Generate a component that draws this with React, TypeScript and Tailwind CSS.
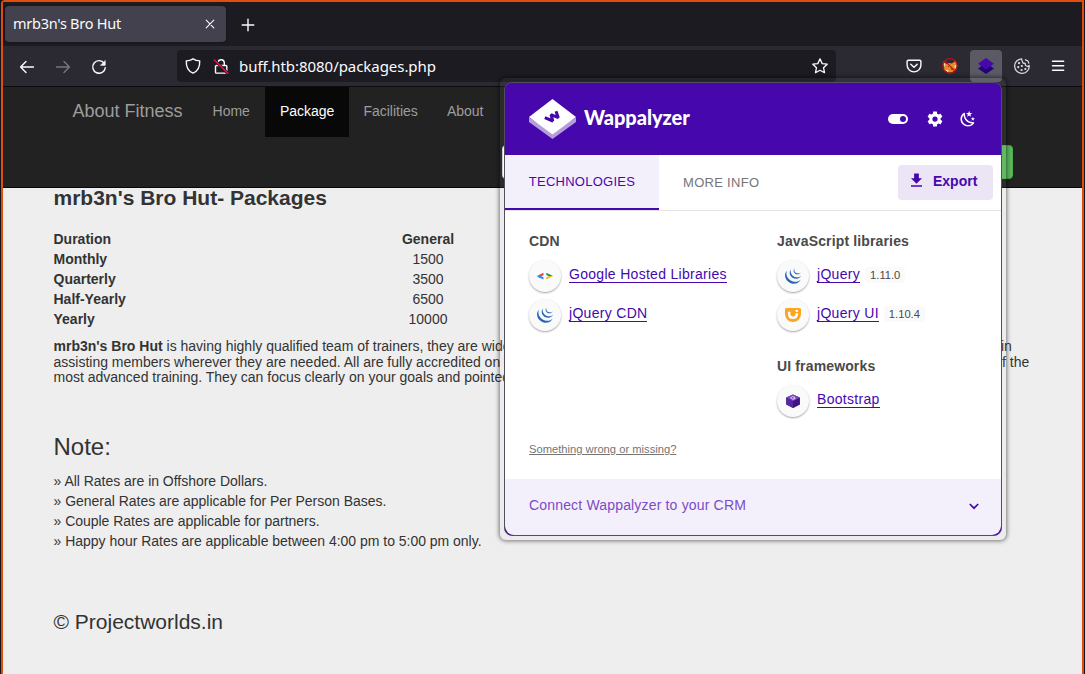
import React from "react";
import { MdDownload } from "react-icons/md";
import { SiJquery } from "react-icons/si";

const MOON =
  "M17.75,4.09L15.22,6.03L16.13,9.09L13.5,7.28L10.87,9.09L11.78,6.03L9.25,4.09L12.44,4L13.5,1L14.56,4L17.75,4.09M21.25,11L19.61,12.25L20.2,14.23L18.5,13.06L16.8,14.23L17.39,12.25L15.75,11L17.81,10.95L18.5,9L19.19,10.95L21.25,11M18.97,15.95C19.8,15.87 20.69,17.05 20.16,17.8C19.84,18.25 19.5,18.67 19.08,19.07C15.17,23 8.84,23 4.94,19.07C1.03,15.17 1.03,8.83 4.94,4.93C5.34,4.53 5.76,4.17 6.21,3.85C6.96,3.32 8.14,4.21 8.06,5.04C7.79,7.9 8.75,10.87 10.95,13.06C13.14,15.26 16.1,16.22 18.97,15.95M17.33,17.97C14.5,17.81 11.7,16.64 9.53,14.5C7.36,12.31 6.2,9.5 6.04,6.68C3.23,9.82 3.34,14.64 6.35,17.66C9.37,20.67 14.19,20.78 17.33,17.97Z";
const COG =
  "M12,15.5A3.5,3.5 0 0,1 8.5,12A3.5,3.5 0 0,1 12,8.5A3.5,3.5 0 0,1 15.5,12A3.5,3.5 0 0,1 12,15.5M19.43,12.97C19.47,12.65 19.5,12.33 19.5,12C19.5,11.67 19.47,11.34 19.43,11L21.54,9.37C21.73,9.22 21.78,8.95 21.66,8.73L19.66,5.27C19.54,5.05 19.27,4.96 19.05,5.05L16.56,6.05C16.04,5.66 15.5,5.32 14.87,5.07L14.5,2.42C14.46,2.18 14.25,2 14,2H10C9.75,2 9.54,2.18 9.5,2.42L9.13,5.07C8.5,5.32 7.96,5.66 7.44,6.05L4.95,5.05C4.73,4.96 4.46,5.05 4.34,5.27L2.34,8.73C2.21,8.95 2.27,9.22 2.46,9.37L4.57,11C4.53,11.34 4.5,11.67 4.5,12C4.5,12.33 4.53,12.65 4.57,12.97L2.46,14.63C2.27,14.78 2.21,15.05 2.34,15.27L4.34,18.73C4.46,18.95 4.73,19.03 4.95,18.95L7.44,17.94C7.96,18.34 8.5,18.68 9.13,18.93L9.5,21.58C9.54,21.82 9.75,22 10,22H14C14.25,22 14.46,21.82 14.5,21.58L14.87,18.93C15.5,18.67 16.04,18.34 16.56,17.94L19.05,18.95C19.27,19.03 19.54,18.95 19.66,18.73L21.66,15.27C21.78,15.05 21.73,14.78 21.54,14.63L19.43,12.97Z";

function Stroke({ className = "", width = 1.5, children }: { className?: string; width?: number; children: React.ReactNode }) {
  return (
    <svg
      className={`size-4 shrink-0 overflow-visible ${className}`}
      viewBox="0 0 16 16"
      fill="none"
      stroke="currentColor"
      strokeWidth={width}
      strokeLinecap="round"
      strokeLinejoin="round"
    >
      {children}
    </svg>
  );
}

function TabStrip() {
  return (
    <div className="flex h-11 items-start bg-[#1c1b22] pt-1 pl-0.5">
      <div className="flex h-9 w-[221px] items-center justify-between rounded bg-[#42414d] pr-2 pl-2 text-[14.5px] shadow-[0_0_2px_rgba(0,0,0,0.5)]">
        <span className="tracking-[-0.25px] whitespace-nowrap text-[#fbfbfe]">mrb3n's Bro Hut</span>
        <Stroke width={1.1} className="text-[#fbfbfe]">
          <path d="M4.2 4.2l7.6 7.6M11.8 4.2l-7.6 7.6" />
        </Stroke>
      </div>
      <Stroke width={1.4} className="mt-[11px] ml-[14px] text-[#fbfbfe]">
        <path d="M8 2.2v11.6M2.2 8h11.6" />
      </Stroke>
    </div>
  );
}

function Toolbar() {
  return (
    <div className="flex h-10 items-center bg-[#2b2a33] text-[#fbfbfe]">
      <Stroke className="mt-px ml-4" width={1.4}>
        <path d="M14.5 8H1.8M7 2.6L1.6 8 7 13.4" />
      </Stroke>
      <Stroke className="mt-px ml-5 text-[#77767e]" width={1.4}>
        <path d="M1.5 8h12.7M9 2.6L14.4 8 9 13.4" />
      </Stroke>
      <Stroke className="mt-px ml-5" width={1.4}>
        <path d="M13.2 4.3A6.3 6.3 0 1 0 14.3 8.6" />
        <path d="M14.2 1.9v4.4H9.8z" fill="currentColor" strokeWidth={0.7} />
      </Stroke>
      <div className="ml-[70px] flex h-8 w-[659px] items-center rounded bg-[#1c1b22] px-2">
        <Stroke width={1.4}>
          <path d="M8 .8c2 1.3 4.2 2 6.7 2.1C15 8.600 12.600 13.300 8 15.200 3.400 13.300 1 8.600 1.300 2.900 3.800 2.800 6 2.100 8 .8z" />
        </Stroke>
        <Stroke width={1.4} className="ml-3">
          <path d="M3.500 7.500h9.500a.8.8 0 0 1 .8.8v6a.8.8 0 0 1-.8.8H3.300a.8.8 0 0 1-.8-.8V8M5 4.200a3.200 3.200 0 0 1 6.300.6v2.500" />
          <path d="M1.300 2L15 15.300" stroke="#1c1b22" strokeWidth="3" />
          <path d="M1.300 2L15 15.300" stroke="#f0104a" strokeWidth="1.500" />
        </Stroke>
        <span className="ml-[10px] text-[15px] tracking-[-0.050px] whitespace-nowrap">buff.htb:8080/packages.php</span>
        <Stroke width={1.300} className="ml-auto">
          <path d="M8 .9l2.200 4.700 5 .6-3.700 3.500 1 5L8 12.300l-4.500 2.400 1-5L.8 6.200l5-.6z" />
        </Stroke>
      </div>
      <Stroke className="ml-[70px]" width={1.400}>
        <path d="M2.300 2.200h11.400a1.200 1.200 0 0 1 1.200 1.200V7A6.900 6.900 0 0 1 1.100 7V3.400a1.200 1.200 0 0 1 1.200-1.200z" />
        <path d="M4.800 6.200L8 9.300l3.200-3.100" />
      </Stroke>
      <svg className="ml-5 size-4 shrink-0 overflow-visible" viewBox="0 0 16 16">
        <path d="M0.800 3.500l3.500 2.200 2.500-.6 3 .4 4-2.800 1 5-1.200 3.500-3.500 3-4 .200L2 11.500 2.500 7z" fill="#ec8b1d" />
        <path d="M.8 3.500l2.500 2.700-1.200 3.500z M14.800 6.500L12 8l1.500 2.500z M3 12l3 2 .5-2z" fill="#f3ddc2" />
        <path d="M8.500 10.500l1 1.500h2l-1.500-2z M5.500 8.200h1.500v1h-1.500z" fill="#8a4a16" />
        <circle cx="8" cy="8" r="7.300" fill="none" stroke="#b5121a" strokeWidth="1.200" />
        <path d="M2.800 2.800l10.400 10.400" stroke="#b5121a" strokeWidth="1.200" />
      </svg>
      <div className="ml-3 flex size-8 items-center justify-center rounded bg-[#5b5a64]">
        <svg className="size-4" viewBox="0 0 16 16">
          <path d="M8 5l8 5.500L8 16 0 10.500z" fill="#21037a" />
          <path d="M8 0l8 5.800-8 5.700-8-5.700z" fill="#4608ad" />
        </svg>
      </div>
      <Stroke className="ml-3 text-[#d6d6da]" width={1.300}>
        <path d="M7.500.8A7.300 7.300 0 1 0 15.200 7.500l-1.700 1-2-1-.3-2-2.200-.5-.8-2z" />
        <path d="M11.500 1.800l2.500 1.200.8 2.200" />
        <path d="M5 5.200h.1M7.800 8h.1M4.200 9.200h.1M7.500 12h.1M11.300 11h.1" strokeWidth="2.200" />
      </Stroke>
      <Stroke className="ml-5" width={1.400}>
        <path d="M2.500 3.300h11.200M2.500 7.700h11.200M2.500 12.200h11.200" />
      </Stroke>
    </div>
  );
}

function SiteNav() {
  return (
    <nav className="flex h-[102px] flex-col border-t border-b border-t-[#0c0c0d] border-b-[#080808] bg-[#222] text-[14px] leading-5 text-[#9d9d9d]">
      <div className="flex h-[50px] pl-[54.5px]">
        <a className="px-[15px] py-[14px] text-[18px]">About Fitness</a>
        <a className="px-[15px] py-[14px]">Home</a>
        <a className="bg-[#080808] px-[15px] py-[14px] text-white">Package</a>
        <a className="px-[14px] py-[14px]">Facilities</a>
        <a className="px-[15px] py-[14px]">About</a>
      </div>
      <div className="mt-2 flex h-[34px] pl-[499px]">
        <div className="w-[200px] rounded border border-[#ccc] bg-white" />
        <div className="ml-[240px] w-[71px] rounded border border-[#4cae4c] bg-[#5cb85c]" />
      </div>
    </nav>
  );
}

const RATES = [
  ["Monthly", "1500"],
  ["Quarterly", "3500"],
  ["Half-Yearly", "6500"],
  ["Yearly", "10000"],
];

const NOTES = [
  "All Rates are in Offshore Dollars.",
  "General Rates are applicable for Per Person Bases.",
  "Couple Rates are applicable for partners.",
  "Happy hour Rates are applicable between 4:00 pm to 5:00 pm only.",
];

function Page() {
  return (
    <main className="flex-1 bg-[#eee] pl-[50.500px] text-[14px] leading-5 text-[#333]">
      <h1 className="h-[41px] text-[21px] leading-5 font-bold">mrb3n's Bro Hut- Packages</h1>
      <div className="w-[500px]">
        <div className="flex font-bold">
          <span className="w-[300px]">Duration</span>
          <span className="w-[149px] text-center">General</span>
        </div>
        {RATES.map(([name, price]) => (
          <div className="flex" key={name}>
            <span className="w-[300px] font-bold">{name}</span>
            <span className="w-[149px] text-center">{price}</span>
          </div>
        ))}
      </div>
      <div className="mt-[10px] text-[14px] leading-[15.500px] whitespace-nowrap">
        <div className="flex">
          <p className="w-[947.500px]"><b>mrb3n's Bro Hut</b> is having highly qualified team of trainers, they are wide</p>
          <span>in</span>
        </div>
        <div className="flex">
          <p className="w-[948.500px]">assisting members wherever they are needed. All are fully accredited on t</p>
          <span>f the</span>
        </div>
        <p>most advanced training. They can focus clearly on your goals and pointed</p>
      </div>
      <h2 className="mt-[48.500px] text-[24px] leading-[26px]">Note:</h2>
      <ul className="mt-[11px] tracking-[-0.020px]">
        {NOTES.map((n) => (
          <li key={n}>» {n}</li>
        ))}
      </ul>
      <p className="mt-[59px] text-[21px] leading-[23px]">© Projectworlds.in</p>
    </main>
  );
}

function GoogleIcon() {
  return (
    <svg className="size-4" viewBox="0 0 16 16">
      <path d="M0 8l6.500-3.200v2.400L4 8.200z" fill="#ea4335" />
      <path d="M0 8h4l2.500 1.200v2.400l-5-2.200z" fill="#4285f4" />
      <path d="M16 8L9.300 4.700v2.400L12 8.200z" fill="#0f9d58" />
      <path d="M16 8h-4L9.300 9.200v2.400z" fill="#fbbc05" />
    </svg>
  );
}

function JQueryIcon() {
  return <SiJquery className="size-4 text-[#2b66b5]" />;
}

function JQueryUIIcon() {
  return (
    <svg className="size-4" viewBox="0 0 16 16">
      <path d="M1.500 1h13A1.500 1.500 0 0 1 16 2.500V7A8 8 0 0 1 0 7V2.500A1.500 1.500 0 0 1 1.500 1z" fill="#faa523" />
      <path d="M4.200 4.800V7c0 2.300 1.500 3.700 3.800 3.700S11.800 9.300 11.800 7v-.8" fill="none" stroke="#fff" strokeWidth="2.500" />
      <path d="M10.500 2.900h2.500v1.900h-2.500z" fill="#fff" />
    </svg>
  );
}

function BootstrapIcon() {
  return (
    <svg className="size-4" viewBox="0 0 16 16">
      <path d="M8 1.500l6.800 3v7L8 15l-6.800-3.500v-7z" fill="#5a2da0" />
      <path d="M1.200 4.500L8 8v7l-6.800-3.500z" fill="#5426a0" />
      <path d="M14.800 4.500L8 8v7l6.800-3.500z" fill="#3d1580" />
      <path d="M8 1.500l6.800 3L8 8 1.200 4.500z" fill="#7546b8" />
      <path d="M5.300 4.700l3-1.300 1.600 1-1.500.7 2 .3-2.300 1.100z" fill="none" stroke="#e9ddf8" strokeWidth=".8" />
    </svg>
  );
}

function Tech({ icon, name, version }: { icon: React.ReactNode; name: string; version?: string }) {
  return (
    <div className="flex h-[39px] items-start">
      <span className="flex size-8 items-center justify-center rounded-full bg-[#fafafa] shadow-[0_1px_2px_rgba(0,0,0,0.35)]">{icon}</span>
      <a className="mt-[5.500px] ml-2 border-b border-[#4608ad] text-[14px] leading-[16px] tracking-[0.300px] text-[#4608ad]">{name}</a>
      {version && <span className="mt-[7px] ml-[5px] rounded bg-[#fafafa] px-[5px] text-[11.200px] leading-[16px] text-[#4a4a4a]">{version}</span>}
    </div>
  );
}

function Popup() {
  return (
    <div className="absolute top-[78px] left-[500px] h-[462px] w-[506px] rounded-md bg-[#dcdce8]/5 p-1 shadow-[0_0_4px_1px_rgba(0,0,0,0.5)]">
      <section className="flex h-[454px] w-[498px] flex-col overflow-hidden rounded-lg border border-[#52505f] bg-[#4608ad]">
        <header className="flex h-[72px] shrink-0 items-center bg-[#4608ad] pl-6 text-white">
          <svg className="h-10 w-[47px]" viewBox="0 0 47 40">
            <path d="M0 18.500v4.500L23.500 40 47 23v-4.500L23.500 33z" fill="#b59ddd" />
            <path d="M23.500 0L47 18 23.500 35.500 0 18z" fill="#fff" />
            <path d="M15.800 18.200l8 3.300-1.800-6.300 7.300 3-2.300-6.500" transform="translate(0 .5)" fill="none" stroke="#4608ad" strokeWidth="3" strokeLinejoin="bevel" />
          </svg>
          <span className="mt-[-5px] ml-2 font-['Lato',sans-serif] text-[20px] font-black tracking-[-0.060px]">Wappalyzer</span>
          <svg className="ml-auto size-6" viewBox="0 0 24 24">
            <rect x="2" y="7" width="20" height="10" rx="5" fill="#fff" />
            <circle cx="17" cy="12" r="3" fill="#4608ad" />
          </svg>
          <svg className="ml-4 size-[18px]" viewBox="0 0 24 24" fill="#fff"><path d={COG} /></svg>
          <svg className="mr-[24px] ml-[15px] size-[18px]" viewBox="0 0 24 24" fill="#fff"><path d={MOON} /></svg>
        </header>
        <div className="flex h-14 shrink-0 border-b border-[#e4e4e4] bg-white text-[13px] tracking-[0.250px]">
          <div className="flex w-[154px] justify-center border-b-2 border-[#4608ad] bg-[#f4f0fb] pt-[17px] text-[#4608ad]">TECHNOLOGIES</div>
          <div className="ml-6 pt-[18px] tracking-[0.300px] text-[#757575]">MORE INFO</div>
          <div className="mt-[10px] mr-2 ml-auto flex h-[35px] w-[95px] items-center rounded bg-[#ece5f6] pl-[9px] text-[14px] font-bold tracking-normal text-[#4608ad]">
            <MdDownload className="mt-[-4px] size-[19px]" />
            <span className="mt-[-2px] ml-[7px]">Export</span>
          </div>
        </div>
        <div className="flex h-[268px] shrink-0 flex-col bg-white pl-6 text-[14px]">
          <div className="flex h-[228px]">
            <div className="w-[248px]">
              <h3 className="mt-5 mb-[9px] leading-5 font-bold tracking-[0.120px] text-[#4a4a4a]">CDN</h3>
              <Tech icon={<GoogleIcon />} name="Google Hosted Libraries" />
              <Tech icon={<JQueryIcon />} name="jQuery CDN" />
            </div>
            <div>
              <h3 className="mt-5 mb-[9px] leading-5 font-bold tracking-[0.140px] text-[#4a4a4a]">JavaScript libraries</h3>
              <Tech icon={<JQueryIcon />} name="jQuery" version="1.11.0" />
              <Tech icon={<JQueryUIIcon />} name="jQuery UI" version="1.10.4" />
              <h3 className="mt-[18px] mb-[9px] leading-5 font-bold tracking-[0.140px] text-[#4a4a4a]">UI frameworks</h3>
              <Tech icon={<BootstrapIcon />} name="Bootstrap" />
            </div>
          </div>
          <a className="text-[11.200px] leading-5 text-[#757575] underline">Something wrong or missing?</a>
        </div>
        <div className="flex flex-1 bg-[linear-gradient(#f4f0fb_50%,#4608ad_50%)]">
          <footer className="flex flex-1 items-center justify-between rounded-b-[9px] bg-[#f4f0fb] pr-[21px] pl-6 text-[14px] tracking-[0.170px] text-[#7b4bc9]">
            <span className="mt-[-3px]">Connect Wappalyzer to your CRM</span>
            <svg className="mt-[-2px] size-3" viewBox="0 0 12 12" fill="none" stroke="#4608ad" strokeWidth="1.700">
              <path d="M1.800 4l4.200 4.200L10.200 4" />
            </svg>
          </footer>
        </div>
      </section>
    </div>
  );
}

export default function App() {
  return (
    <div className="relative flex h-[674px] w-[1085px] overflow-hidden bg-[#15131c] pl-px font-['Liberation_Sans',Arial,sans-serif]">
      <div className="flex w-[1083px] flex-col rounded-tl border-x-2 border-t-2 border-[#e04e0e]">
        <div className="font-['Noto_Sans',sans-serif]">
          <TabStrip />
          <Toolbar />
        </div>
        <SiteNav />
        <Page />
      </div>
      <Popup />
    </div>
  );
}
